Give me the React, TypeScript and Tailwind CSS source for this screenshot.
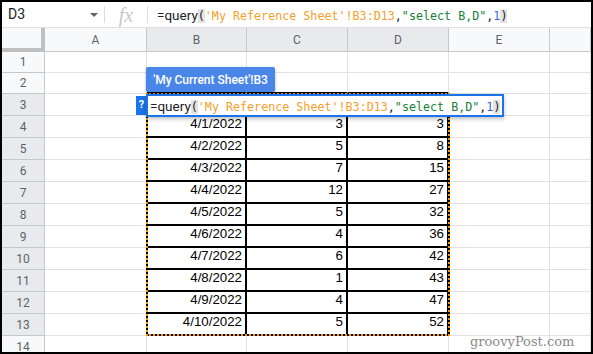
import React from "react";

const colWidths = "grid-cols-[43px_102px_100px_101px_101px_101px_1fr]";
const cols = ["A", "B", "C", "D", "E", ""];

const dates = [
  "4/1/2022",
  "4/2/2022",
  "4/3/2022",
  "4/4/2022",
  "4/5/2022",
  "4/6/2022",
  "4/7/2022",
  "4/8/2022",
  "4/9/2022",
  "4/10/2022",
];
const amounts = [3, 5, 7, 12, 5, 4, 6, 1, 4, 5];
const totals = [3, 8, 15, 27, 32, 36, 42, 43, 47, 52];

function Formula() {
  const mono = "font-['DejaVu_Sans_Mono',monospace] text-[11.7px]";
  return (
    <span className="whitespace-nowrap text-[#202124]">
      <span className="font-['Roboto',sans-serif] text-[13.5px]">=query</span>
      <span className={`${mono} bg-[#e3e3e3]`}>(</span>
      <span className={`${mono} text-[#f5a02b]`}>'My Reference Sheet'!B3:D13</span>
      <span className={mono}>,</span>
      <span className={`${mono} text-[#188038]`}>"select B,D"</span>
      <span className={mono}>,</span>
      <span className={`${mono} text-[#3367d6]`}>1</span>
      <span className={`${mono} bg-[#e3e3e3]`}>)</span>
    </span>
  );
}

function FormulaBar() {
  return (
    <div className="flex h-[26px] items-center border-b border-[#e0e0e0] bg-white">
      <div className="flex w-[102px] items-center justify-between pl-[6px] pr-[6px]">
        <span className="text-[14px] text-[#202124]">D3</span>
        <span className="h-0 w-0 border-x-[4px] border-t-[4px] border-x-transparent border-t-[#5f6368]" />
      </div>
      <div className="h-[17px] w-px bg-[#dadce0]" />
      <div className="flex w-[42px] items-center justify-center">
        <span className="font-['Liberation_Serif',serif] text-[20px] italic leading-none text-[#c8c8c8]">
          fx
        </span>
      </div>
      <div className="h-[17px] w-px bg-[#dadce0]" />
      <div className="pl-[9px]">
        <Formula />
      </div>
    </div>
  );
}

function rowHeight(r: number) {
  if (r <= 2) return "h-[21px]";
  return "h-[22px]";
}

export default function App() {
  const rows = Array.from({ length: 14 }, (_, i) => i + 1);

  return (
    <div className="relative h-[354px] w-[593px] overflow-hidden border-2 border-black bg-white font-['Roboto',sans-serif]">
      <FormulaBar />
      <div className="relative">
        <div className={`grid ${colWidths}`}>
          <div className="h-[24px] border-b-4 border-r-4 border-[#c0c0c0] bg-[#f8f9fa]" />
          {cols.map((c, ci) => {
            const active = c === "B" || c === "C" || c === "D";
            return (
              <div
                key={ci}
                className={`flex h-[24px] items-center justify-center border-b border-r border-[#c7c7c7] text-[12px] text-[#5f6368] ${
                  active ? "bg-[#e8eaed]" : "bg-[#f8f9fa]"
                }`}
              >
                {c}
              </div>
            );
          })}

          {rows.map((r) => {
            const active = r >= 3 && r <= 13;
            const h = rowHeight(r);
            return (
              <React.Fragment key={r}>
                <div
                  className={`flex ${h} items-center justify-center border-b border-r border-[#c7c7c7] text-[12px] text-[#5f6368] ${
                    active ? "bg-[#e8eaed]" : "bg-[#f8f9fa]"
                  }`}
                >
                  {r}
                </div>
                {cols.map((c, ci) => {
                  const inTable = r >= 3 && r <= 13 && (c === "B" || c === "C" || c === "D");
                  const aboveTable = r === 2 && (c === "B" || c === "C" || c === "D");
                  let border = "border-b border-r border-[#e2e2e3]";
                  if (inTable) border = "border-b-2 border-r-2 border-black";
                  else if (aboveTable) border = "border-b-2 border-r border-b-black border-r-[#e2e2e3]";
                  let value: string | number = "";
                  if (r >= 4 && r <= 13) {
                    const i = r - 4;
                    if (c === "B") value = dates[i];
                    if (c === "C") value = amounts[i];
                    if (c === "D") value = totals[i];
                  }
                  return (
                    <div
                      key={ci}
                      className={`flex ${h} items-end justify-end pb-[2px] pr-[3px] font-['Liberation_Sans',Arial,sans-serif] text-[13.3px] text-black ${border}`}
                    >
                      {value}
                    </div>
                  );
                })}
              </React.Fragment>
            );
          })}
        </div>

        {/* copy marquee around B3:D13 */}
        <div className="absolute left-[144px] top-[65px] h-[243px] w-[304px] border-2 border-black" />
        <div className="absolute left-[144px] top-[65px] h-[243px] w-[304px] border-2 border-dotted border-[#f29900]" />

        {/* range tooltip */}
        <div className="absolute left-[144px] top-[39px] flex h-[25px] w-[129px] items-center justify-center whitespace-nowrap rounded-[2px] bg-[#4a86e8] text-[12px] font-medium text-white shadow-[0_1px_3px_rgba(0,0,0,0.3)]">
          'My Current Sheet'!B3
        </div>

        {/* help badge */}
        <div className="absolute left-[134px] top-[68px] flex h-[19px] w-[11px] items-center justify-center bg-[#1a73e8] text-[11px] font-bold text-white">
          ?
        </div>

        {/* cell editor */}
        <div className="absolute left-[144px] top-[66px] flex h-[23px] w-[358px] items-center border-2 border-[#1a73e8] bg-white pl-[2px] shadow-[0_2px_4px_rgba(0,0,0,0.25)]">
          <Formula />
        </div>

        <div className="absolute left-[468px] top-[304px] font-['DejaVu_Serif',serif] text-[13px] text-[#8a8a8a]">
          groovyPost.com
        </div>
      </div>
    </div>
  );
}
